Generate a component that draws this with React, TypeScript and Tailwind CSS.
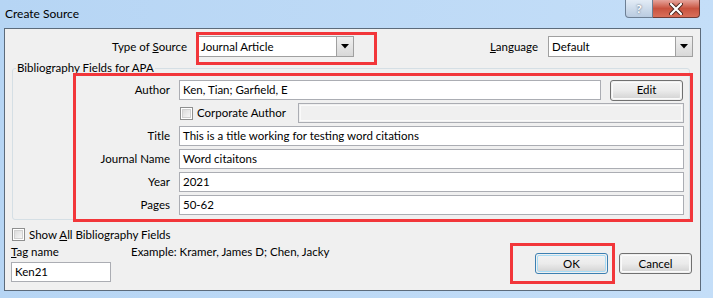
import React from "react";

const font = { fontFamily: "Lato, 'Liberation Sans', sans-serif" };

function DropBtn() {
  return (
    <div className="w-[17px] h-full border-l border-[#a0a0a0] bg-gradient-to-b from-[#f0f0f0] to-[#d8d8d8] flex items-center justify-center">
      <svg width="8" height="5" viewBox="0 0 8 5">
        <path d="M0 0 L8 0 L4 4.5 Z" fill="#000" />
      </svg>
    </div>
  );
}

function Checkbox() {
  return (
    <div className="w-[13px] h-[13px] border border-[#8e8f8f] bg-white p-[1px]">
      <div className="w-full h-full bg-gradient-to-br from-[#dcdcdc] to-[#f6f6f6] border border-[#d0d0d0]" />
    </div>
  );
}

function Field({ value, className = "" }: { value: string; className?: string }) {
  return (
    <div className={`h-[20px] border border-[#abadb3] bg-white flex items-center pl-[3px] text-[11.5px] text-black ${className}`}>
      {value}
    </div>
  );
}

function Btn({ label, focus = false }: { label: string; focus?: boolean }) {
  return (
    <div
      className={`w-[73px] h-[21px] rounded-[3px] border ${
        focus ? "border-[#3c7fb1]" : "border-[#707070]"
      } p-[1px]`}
    >
      <div
        className={`w-full h-full rounded-[2px] ${
          focus ? "border border-[#a8dcf5]" : "border border-[#fafafa]"
        } bg-gradient-to-b from-[#f2f2f2] via-[#ebebeb] to-[#d6d6d6] flex items-center justify-center text-[11.5px] text-black`}
      >
        {label}
      </div>
    </div>
  );
}

export default function App() {
  const rows: [string, string][] = [
    ["Title", "This is a title working for testing word citations"],
    ["Journal Name", "Word citaitons"],
    ["Year", "2021"],
    ["Pages", "50-62"],
  ];
  return (
    <div className="relative w-[713px] h-[298px] overflow-hidden bg-gradient-to-r from-[#b6d5f4] to-[#c4def8]" style={font}>
      {/* Title bar */}
      <div className="h-[28px] flex items-start">
        <div className="pl-[5px] pt-[6px] text-[12px] text-black leading-[16px]">Create Source</div>
        <div className="ml-auto mr-[13px] flex">
          <div className="w-[28px] h-[18px] rounded-bl-[4px] border border-t-0 border-[#6d7f94] bg-gradient-to-b from-[#e3ecf6] to-[#b9cbe0] flex items-center justify-center text-[12px] font-bold text-[#fefefe] [text-shadow:0_0_2px_#3b4c5e]">
            ?
          </div>
          <div className="w-[47px] h-[18px] rounded-br-[4px] border border-l-0 border-t-0 border-[#6f3a35] bg-gradient-to-b from-[#e5a39b] via-[#c8523f] to-[#d96f5a] flex items-center justify-center">
            <svg width="14" height="12" viewBox="0 0 14 12">
              <path d="M2 1 L12 11 M12 1 L2 11" stroke="#4a2620" strokeWidth="4" strokeLinecap="round" />
              <path d="M2 1 L12 11 M12 1 L2 11" stroke="#fff" strokeWidth="2.2" strokeLinecap="round" />
            </svg>
          </div>
        </div>
      </div>

      {/* Client area */}
      <div className="ml-[4px] w-[697px] h-[263px] border border-[#5c6b7b] bg-[#f0f0f0] text-[11.5px] text-black flex flex-col">
        {/* Row 1 */}
        <div className="mt-[7px] h-[21px] flex items-center pr-[7px]">
          <div className="w-[182px] text-right">
            Type of <span className="underline">S</span>ource
          </div>
          <div className="ml-[10px] w-[157px] h-[21px] border border-[#a0a0a0] bg-white flex">
            <div className="flex-1 pl-[3px] flex items-center">Journal Article</div>
            <DropBtn />
          </div>
          <div className="ml-auto">
            <span className="underline">L</span>anguage
          </div>
          <div className="ml-[10px] w-[145px] h-[21px] border border-[#a0a0a0] bg-white flex">
            <div className="flex-1 pl-[3px] flex items-center">Default</div>
            <DropBtn />
          </div>
        </div>

        {/* Group box */}
        <fieldset className="mt-[4px] ml-[7px] mr-[10px] h-[159px] border border-[#d5dfe5] rounded-[3px] px-0 pb-0">
          <legend className="ml-[3px] px-[1px] leading-[14px]">Bibliography Fields for APA</legend>
          <div className="mt-[5px] flex flex-col gap-[3px] pr-[5px]">
            <div className="flex items-center h-[20px]">
              <div className="w-[157px] text-right">Author</div>
              <Field value="Ken, Tian; Garfield, E" className="ml-[9px] w-[422px]" />
              <div className="ml-[9px]">
                <Btn label="Edit" />
              </div>
            </div>
            <div className="flex items-center h-[20px]">
              <div className="ml-[167px]">
                <Checkbox />
              </div>
              <div className="ml-[4px]">Corporate Author</div>
              <div className="ml-auto w-[386px] h-[20px] border border-[#abadb3] bg-[#f0f0f0] p-[1px]">
                <div className="w-full h-full border border-[#fafafa]" />
              </div>
            </div>
            {rows.map(([l, v]) => (
              <div key={l} className="flex items-center h-[20px]">
                <div className="w-[157px] text-right">{l}</div>
                <Field value={v} className="ml-[9px] flex-1" />
              </div>
            ))}
          </div>
        </fieldset>

        {/* Show all */}
        <div className="mt-[8px] ml-[7px] flex items-center h-[13px]">
          <Checkbox />
          <div className="ml-[4px]">
            Show <span className="underline">A</span>ll Bibliography Fields
          </div>
        </div>

        {/* Bottom row */}
        <div className="mt-[4px] ml-[6px] pr-[8px] flex items-start">
          <div className="flex flex-col">
            <div className="leading-[14px]">
              <span className="underline">T</span>ag name
            </div>
            <Field value="Ken21" className="mt-[3px] w-[100px]" />
          </div>
          <div className="ml-[20px] leading-[14px]">Example: Kramer, James D; Chen, Jacky</div>
          <div className="ml-auto mt-[8px] flex gap-[11px]">
            <Btn label="OK" focus />
            <Btn label="Cancel" />
          </div>
        </div>
      </div>

      {/* Red annotation boxes */}
      <div className="absolute left-[196px] top-[32px] w-[181px] h-[33px] border-[3px] border-[#f2363a]" />
      <div className="absolute left-[73px] top-[73px] w-[620px] h-[149px] border-[3px] border-[#f2363a]" />
      <div className="absolute left-[510px] top-[243px] w-[105px] h-[41px] border-[3px] border-[#f2363a]" />
    </div>
  );
}
